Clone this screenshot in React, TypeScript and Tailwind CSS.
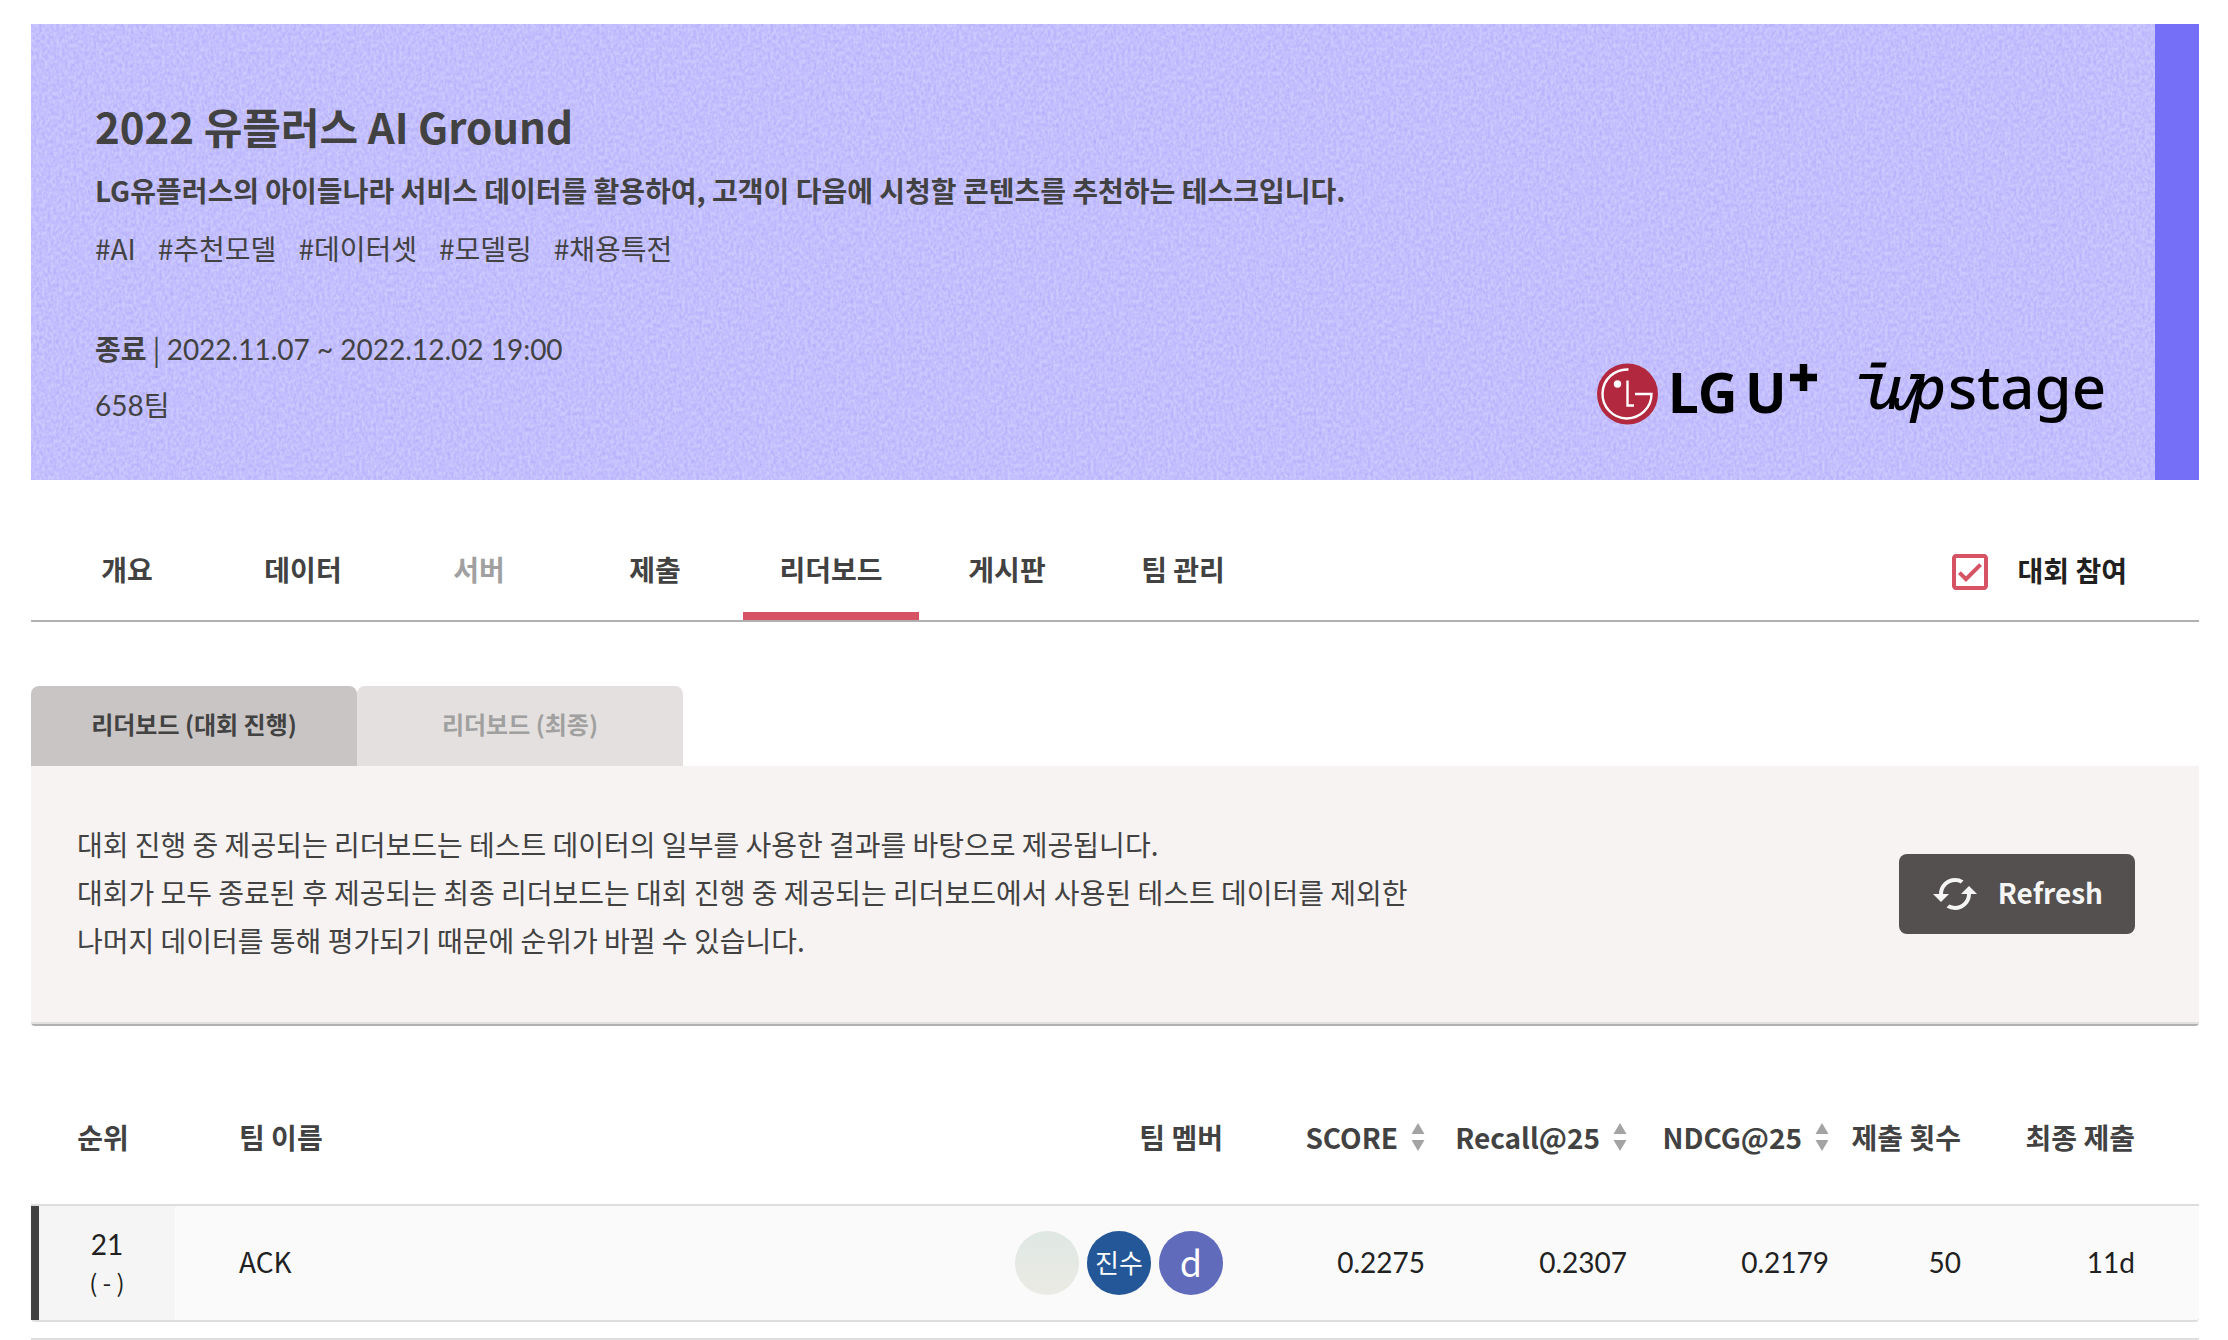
import React from "react";
import { MdCached, MdOutlineCheckBox } from "react-icons/md";

const tags = ["#AI", "#추천모델", "#데이터셋", "#모델링", "#채용특전"];

const navItems = [
  { label: "개요" },
  { label: "데이터" },
  { label: "서버", disabled: true },
  { label: "제출" },
  { label: "리더보드", active: true },
  { label: "게시판" },
  { label: "팀 관리" },
];

const sans = "font-['Noto_Sans_CJK_KR',sans-serif]";
const bold = "font-['Noto_Sans_CJK_KR',sans-serif] font-bold";

function PaperTexture() {
  return (
    <svg className="absolute inset-0 h-full w-full" aria-hidden="true">
      <filter id="paper" x="0" y="0" width="100%" height="100%" colorInterpolationFilters="sRGB">
        <feTurbulence type="fractalNoise" baseFrequency="0.35 0.25" numOctaves="3" seed="4" />
        <feColorMatrix values="0 0 0 0 0.64  0 0 0 0 0.61  0 0 0 0 0.98  1 0 0 0 -0.28" />
      </filter>
      <rect width="100%" height="100%" filter="url(#paper)" />
    </svg>
  );
}

function LgLogo() {
  return (
    <svg width="222" height="96" viewBox="0 -12 222 96" role="img" aria-label="LG U+" className="overflow-visible">
      <circle cx="30.500" cy="36" r="30.500" fill="#b2293f" />
      <path d="M31.500 11.500A24.500 24.500 0 1 0 54.500 36H38" fill="none" stroke="#fff" strokeWidth="2.400" />
      <path d="M30.500 22.500V47.500H37" fill="none" stroke="#fff" strokeWidth="2.400" />
      <circle cx="20.500" cy="26" r="3.700" fill="#fff" />
      <text x="71" y="55" className="font-['Noto_Sans'] text-[55px] font-bold">LG</text>
      <text x="148" y="55" className="font-['Noto_Sans'] text-[55px] font-bold">U</text>
      <path d="M193 19.500h27M206.500 6v27" stroke="#000" strokeWidth="7.500" />
    </svg>
  );
}

function UpstageLogo() {
  return (
    <svg width="250" height="96" viewBox="0 -12 250 96" role="img" aria-label="upstage" className="overflow-visible">
      <path d="M12.500 4.500h15l-1.200 5h-15zM1 16h23l-1.200 5h-23zM52 16h14l-1.200 5h-14z" />
      <path d="M38 40C35 54 45 52 49 44L60 22" fill="none" stroke="#000" strokeWidth="4.500" />
      <text x="8" y="51" className="font-['Noto_Sans'] text-[60px] font-medium italic">u</text>
      <text x="52" y="51" className="font-['Noto_Sans'] text-[60px] font-medium italic">p</text>
      <text x="89" y="51" className="font-['Noto_Sans'] text-[60px] font-medium">stage</text>
    </svg>
  );
}

function SortButton({ label }: { label: string }) {
  return (
    <button type="button" className="inline-flex items-center gap-[13px] whitespace-nowrap">
      {label}
      <svg width="14" height="28" viewBox="0 0 14 28" fill="#a3a3a3" aria-hidden="true">
        <path d="M7 0l6.500 11h-13zM7 28l-6.500-11h13z" />
      </svg>
    </button>
  );
}

export default function App() {
  return (
    <main className="bg-white py-6 pl-[31px] pr-[29px] font-[Lato,'Noto_Sans_CJK_KR',sans-serif] text-[28px] leading-[40px] text-[#424242]">
      <header className="relative flex items-end justify-between border-r-[44px] border-[#756ef7] bg-[#ccc9ff] pb-[38px] pl-16 pr-[46px] pt-[70px]">
        <PaperTexture />
        <div className="relative pb-[17px]">
          <h1 className={`${bold} text-[42px] leading-[64px]`}>2022 유플러스 AI Ground</h1>
          <p className={`${bold} mt-3`}>
            LG유플러스의 아이들나라 서비스 데이터를 활용하여, 고객이 다음에 시청할 콘텐츠를 추천하는 테스크입니다.
          </p>
          <ul className={`${sans} mt-[18px] flex gap-[22px]`}>
            {tags.map((t) => (
              <li key={t}>{t}</li>
            ))}
          </ul>
          <p className="mt-[60px]">
            <strong className={bold}>종료</strong>
            <span className={sans}> | </span>
            2022.11.07 ~ 2022.12.02 19:00
          </p>
          <p className="mt-4">658팀</p>
        </div>
        <div className="relative flex gap-10">
          <LgLogo />
          <UpstageLogo />
        </div>
      </header>

      <nav className={`${bold} mt-[50px] flex items-stretch justify-between border-b-2 border-[#b0b0b0] pl-2 pr-[72px]`}>
        <ul className="flex">
          {navItems.map((n) => (
            <li key={n.label} className="w-44">
              <a
                href="#"
                aria-disabled={n.disabled}
                className={`block h-[90px] pt-[19px] text-center ${
                  n.active ? "border-b-8 border-[#d65364]" : n.disabled ? "text-[#a0a0a0]" : ""
                }`}
              >
                {n.label}
              </a>
            </li>
          ))}
        </ul>
        <button type="button" className="flex h-[84px] items-center gap-6 text-[#212121]">
          <MdOutlineCheckBox size={48} color="#d65364" />
          <span className="pb-1">대회 참여</span>
        </button>
      </nav>

      <div className={`${bold} mt-16 flex text-[24px]`} role="tablist">
        <button type="button" role="tab" aria-selected="true" className="h-20 w-[326px] rounded-t-lg bg-[#c9c5c4] pb-1">
          리더보드 (대회 진행)
        </button>
        <button type="button" role="tab" aria-selected="false" className="h-20 w-[326px] rounded-t-lg bg-[#e4e0df] pb-1 text-[#a0a0a0]">
          리더보드 (최종)
        </button>
      </div>

      <section className="rounded-b border-b-2 border-[#b0b0b0] bg-[#f6f3f2]">
        <div className="flex items-center justify-between border-b-2 border-[#e0e0e0] py-[54px] pl-[46px] pr-16">
          <p className={`${sans} pb-1 leading-[48px]`}>
            대회 진행 중 제공되는 리더보드는 테스트 데이터의 일부를 사용한 결과를 바탕으로 제공됩니다.
            <br />
            대회가 모두 종료된 후 제공되는 최종 리더보드는 대회 진행 중 제공되는 리더보드에서 사용된 테스트 데이터를 제외한
            <br />
            나머지 데이터를 통해 평가되기 때문에 순위가 바뀔 수 있습니다.
          </p>
          <button type="button" className={`${bold} flex h-20 items-center gap-[19px] rounded-lg bg-[#54504f] px-8 text-[#f5f5f5]`}>
            <MdCached size={48} />
            <span className="pb-1">Refresh</span>
          </button>
        </div>
      </section>

      <table className="mt-[46px] w-full table-fixed border-separate border-spacing-0">
        <colgroup>
          <col className="w-36" />
          <col />
          <col className="w-[300px]" />
          <col className="w-[202px]" />
          <col className="w-[202px]" />
          <col className="w-[202px]" />
          <col className="w-[132px]" />
          <col className="w-[238px]" />
        </colgroup>
        <thead>
          <tr className={`${bold} h-[132px] whitespace-nowrap text-right *:pb-[2px]`}>
            <th className="text-center">순위</th>
            <th className="pl-16 text-left">팀 이름</th>
            <th>팀 멤버</th>
            <th><SortButton label="SCORE" /></th>
            <th><SortButton label="Recall@25" /></th>
            <th><SortButton label="NDCG@25" /></th>
            <th>제출 횟수</th>
            <th className="pr-16">최종 제출</th>
          </tr>
        </thead>
        <tbody>
          <tr className="text-right text-[#212121] *:h-[118px] *:border-y-2 *:border-[#dedede] *:bg-[#fafafa]">
            <td className="rounded-bl p-0 text-center">
              <div className="flex h-[114px] flex-col justify-center border-l-8 border-[#424242] bg-[#f5f5f5] pb-[2px]">
                <span>21</span>
                <span className={`${sans} text-[24px] leading-[36px]`}>( - )</span>
              </div>
            </td>
            <td className={`${sans} pb-1 pl-16 text-left`}>ACK</td>
            <td>
              <div className="flex justify-end gap-2 text-white">
                <span className="size-16 rounded-full bg-linear-to-b from-[#dfe8e4] to-[#ebeae4]" />
                <span className="flex size-16 items-center justify-center rounded-full bg-[#245797] text-[26px]">진수</span>
                <span className={`${sans} flex size-16 items-center justify-center rounded-full bg-[#616bbb] pb-1 text-[36px]`}>d</span>
              </div>
            </td>
            <td className="pb-[2px]">0.2275</td>
            <td className="pb-[2px]">0.2307</td>
            <td className="pb-[2px]">0.2179</td>
            <td className="pb-[2px]">50</td>
            <td className="rounded-br pb-[2px] pr-16">11d</td>
          </tr>
        </tbody>
      </table>
      <hr className="mt-4 -mb-6 border-t-2 border-[#dedede]" />
    </main>
  );
}
